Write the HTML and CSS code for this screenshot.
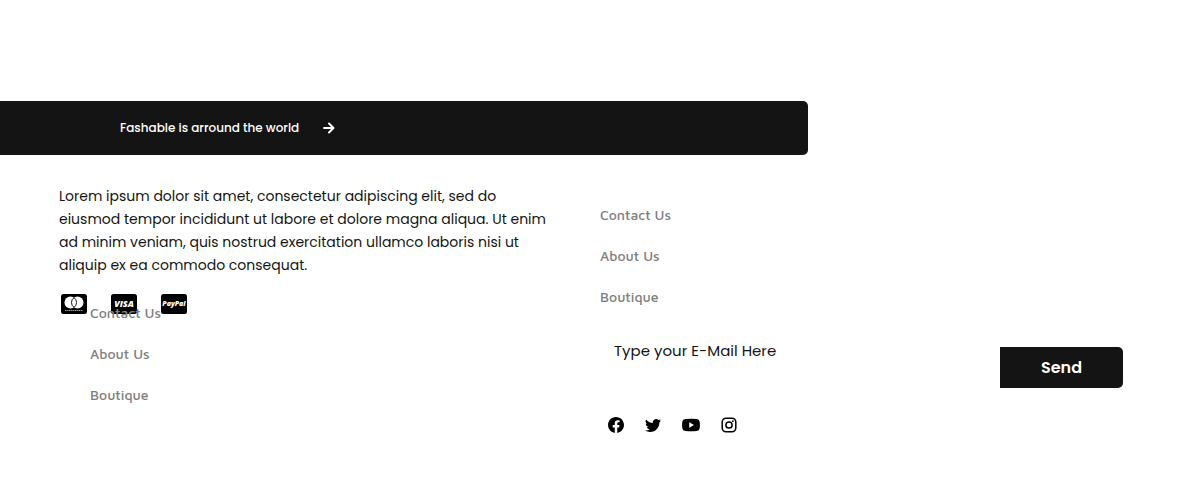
FILE: index.html
```html
<!DOCTYPE html>
<html lang="en">
<head>
    <meta charset="UTF-8">
    <meta name="viewport" content="width=device-width, initial-scale=1.0">
    <title>Fashable</title>
    <link rel="stylesheet" href="styles.css">
</head>
<body>
    <div class="banner">
        <span>Fashable is arround the world</span>
        <svg class="arrow" viewBox="0 0 12 12" aria-hidden="true">
            <path d="M1 6h9M6 1.500l4.500 4.500L6 10.500" fill="none" stroke="currentColor" stroke-width="1.900" stroke-linecap="round" stroke-linejoin="round"/>
        </svg>
    </div>
    <footer class="footer">
        <div class="left">
            <p class="description">Lorem ipsum dolor sit amet, consectetur adipiscing elit, sed do eiusmod tempor incididunt ut labore et dolore magna aliqua. Ut enim ad minim veniam, quis nostrud exercitation ullamco laboris nisi ut aliquip ex ea commodo consequat.</p>
            <!-- payment cards -->
            <div class="cards">
                <svg class="card" viewBox="0 0 26 20" role="img" aria-label="Mastercard">
                    <rect width="26" height="20" rx="2.500"/>
                    <circle cx="9.500" cy="8.500" r="6" fill="#fff"/>
                    <circle cx="16.500" cy="8.500" r="6" fill="#fff"/>
                    <path d="M13 3.600a6 6 0 0 1 0 9.800a6 6 0 0 1 0-9.800z" fill="#fff" stroke="#000" stroke-width="0.900"/>
                    <path d="M4 16.500h18" stroke="#999" stroke-width="1" stroke-dasharray="1.500 0.500"/>
                </svg>
                <svg class="card" viewBox="0 0 26 20" role="img" aria-label="Visa">
                    <rect width="26" height="20" rx="2.500"/>
                    <text class="visa" x="13" y="13" text-anchor="middle">VISA</text>
                </svg>
                <svg class="card" viewBox="0 0 26 20" role="img" aria-label="PayPal">
                    <rect width="26" height="20" rx="2.500"/>
                    <text class="paypal" x="13" y="12" text-anchor="middle">PayPal</text>
                </svg>
            </div>
            <nav class="links links-left">
                <a href="#">Contact Us</a>
                <a href="#">About Us</a>
                <a href="#">Boutique</a>
            </nav>
        </div>
        <div class="right">
            <nav class="links">
                <a href="#">Contact Us</a>
                <a href="#">About Us</a>
                <a href="#">Boutique</a>
            </nav>
            <form class="newsletter">
                <input type="email" aria-label="E-Mail" placeholder="Type your E-Mail Here">
                <button type="button">Send</button>
            </form>
            <!-- social icons -->
            <div class="social">
                <a href="#" aria-label="Facebook">
                    <svg viewBox="0 0 16 16"><path d="M16 8.050C16 3.600 12.420 0 8 0S0 3.600 0 8.050c0 4.020 2.930 7.350 6.750 7.950v-5.620H4.720V8.050h2.030V6.280c0-2.020 1.190-3.130 3.020-3.130.880 0 1.790.160 1.790.160v1.980h-1.010c-.990 0-1.300.620-1.300 1.260v1.500h2.220l-.360 2.330H9.250V16C13.070 15.400 16 12.070 16 8.050z"/></svg>
                </a>
                <a href="#" aria-label="Twitter">
                    <svg viewBox="0 0 16 16"><path d="M5.030 15c6.040 0 9.340-5 9.340-9.330 0-.140 0-.280-.010-.420A6.700 6.700 0 0 0 16 3.540a6.500 6.500 0 0 1-1.890.520 3.300 3.300 0 0 0 1.450-1.820 6.600 6.600 0 0 1-2.090.790 3.290 3.290 0 0 0-5.590 3A9.320 9.320 0 0 1 1.110 2.600a3.290 3.290 0 0 0 1.020 4.380 3.200 3.200 0 0 1-1.490-.410v.040a3.290 3.290 0 0 0 2.630 3.220 3.200 3.200 0 0 1-.860.110c-.210 0-.420-.020-.620-.060a3.290 3.290 0 0 0 3.070 2.280A6.600 6.600 0 0 1 0 13.520 9.300 9.300 0 0 0 5.030 15"/></svg>
                </a>
                <a href="#" aria-label="YouTube">
                    <svg class="youtube" viewBox="0 0 18 16"><path d="M3.500 2Q9 1.400 14.500 2Q17.400 2.300 17.700 4.800Q18.100 8 17.700 11.200Q17.400 13.700 14.500 14Q9 14.600 3.500 14Q.6 13.700.3 11.200Q-.1 8 .3 4.800Q.6 2.300 3.500 2z"/><path d="M7.200 5.300L12 8L7.200 10.700z" fill="#fff"/></svg>
                </a>
                <a href="#" aria-label="Instagram">
                    <svg viewBox="0 0 16 16"><rect x="1.200" y="1.200" width="13.600" height="13.600" rx="3.800" fill="none" stroke="#000" stroke-width="1.500"/><circle cx="8" cy="8" r="3.100" fill="none" stroke="#000" stroke-width="1.500"/><circle cx="11.900" cy="4.200" r="0.900"/></svg>
                </a>
            </div>
        </div>
    </footer>
</body>
</html>
```
FILE: styles.css
```css
* {
    box-sizing: border-box;
}

body {
    margin: 0;
    padding-top: 101px;
    background-color: white;
    color: #141414;
    font-family: 'Poppins', 'Inter', sans-serif;
}

.banner {
    display: flex;
    align-items: center;
    gap: 24px;
    width: 67.3%;
    height: 54px;
    padding-left: 120px;
    background-color: #141414;
    color: white;
    font-size: 12px;
    font-weight: 500;
    border-radius: 0 5px 5px 0;
}

.arrow {
    width: 12px;
    height: 12px;
}

.footer {
    display: grid;
    grid-template-columns: 1fr 1fr;
}

.left {
    padding: 30px 40px 0 59px;
}

.description {
    margin: 0;
    font-size: 14px;
    line-height: 23px;
}

.cards {
    display: flex;
    gap: 24px;
    margin-top: 17px;
    padding-left: 2px;
}

.card {
    width: 26px;
    height: 20px;
}

.card text {
    fill: white;
    font-family: 'Open Sans', sans-serif;
    font-style: italic;
    font-weight: 800;
}

.visa {
    font-size: 9px;
}

.paypal {
    font-size: 7px;
}

.links {
    display: flex;
    flex-direction: column;
    align-items: flex-start;
    gap: 21px;
    font-family: 'Maven Pro', 'Noto Sans', sans-serif;
    font-size: 14px;
    font-weight: 500;
    line-height: 20px;
}

.links a {
    color: gray;
    text-decoration: none;
}

/* the link list runs up over the payment cards */
.links-left {
    position: relative;
    margin-top: -11px;
    padding-left: 31px;
}

.right {
    padding-top: 50px;
}

.newsletter {
    display: flex;
    align-items: flex-end;
    margin-top: 31px;
    padding-right: 77px;
}

.newsletter input {
    flex: 1;
    min-width: 0;
    height: 50px;
    padding: 0 14px 26px;
    border: none;
    outline: none;
    background: transparent;
    font-family: inherit;
    font-size: 15px;
}

.newsletter input::placeholder {
    color: #141414;
    opacity: 1;
}

.newsletter button {
    width: 123px;
    height: 41px;
    border: none;
    border-radius: 0 5px 5px 0;
    background-color: #141414;
    color: white;
    font-family: inherit;
    font-size: 16px;
    font-weight: 600;
    cursor: pointer;
}

.social {
    display: flex;
    gap: 21px;
    margin-top: 29px;
    padding-left: 8px;
}

.social svg {
    display: block;
    width: 16px;
    height: 16px;
}

.social .youtube {
    width: 18px;
}
```
